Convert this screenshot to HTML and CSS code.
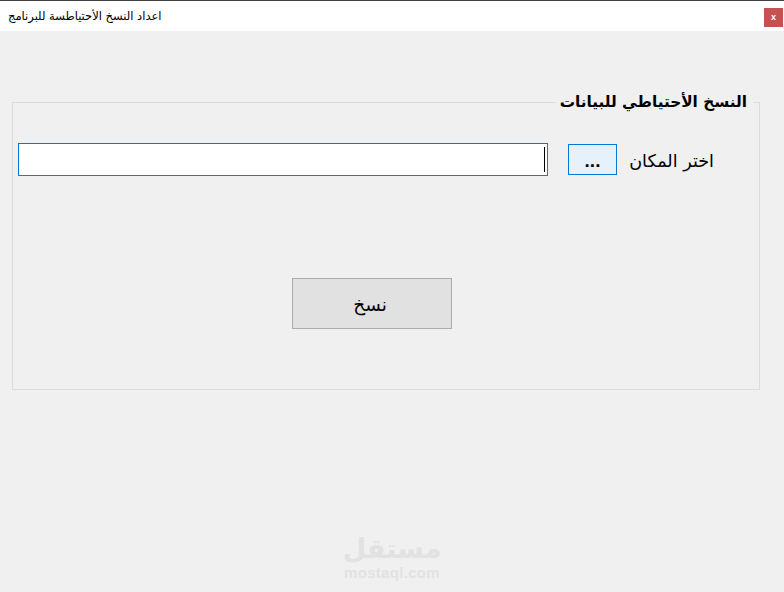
FILE: index.html
```html
<!DOCTYPE html>
<html lang="ar" dir="rtl">
<head>
  <meta charset="UTF-8" />
  <meta name="viewport" content="width=device-width, initial-scale=1.0" />
  <title>اعداد النسخ الأحتياطسة للبرنامج</title>
  <link rel="stylesheet" href="styles.css">
</head>
<body>
  <div class="window">
    <div class="titlebar">
      <span class="title">اعداد النسخ الأحتياطسة للبرنامج</span>
      <button class="close">x</button>
    </div>

    <div class="content">
      <fieldset class="group">
        <legend>النسخ الأحتياطي للبيانات</legend>
        <div class="path-row">
          <span class="path-label">اختر المكان</span>
          <button class="browse">...</button>
          <div class="path-input">
            <span class="caret"></span>
          </div>
        </div>
        <div class="actions">
          <button class="copy">نسخ</button>
        </div>
      </fieldset>
    </div>

    <div class="watermark">
      <div class="mark-ar">مستقل</div>
      <div class="mark-en">mostaql.com</div>
    </div>
  </div>
</body>
</html>
```

FILE: styles.css
```css
html, body { margin: 0; padding: 0; }
body { font-family: "DejaVu Sans", "Noto Sans", sans-serif; background: #f0f0f0; color: #000; }
button { font-family: inherit; cursor: pointer; }

.window { position: relative; width: 784px; height: 592px; overflow: hidden; background: #f0f0f0; }

.titlebar { height: 30px; background: #fff; border-top: 1px solid #444; display: flex; justify-content: space-between; align-items: flex-start; padding: 0 1px 0 0; }
.title { order: 2; font-size: 11.5px; line-height: 30px; margin-left: 8px; white-space: nowrap; }
.close { order: 1; width: 19px; height: 19px; margin: 7px 0 0 1px; padding: 0; border: none; background: #c75050; color: #fff; font-size: 9px; font-weight: bold; line-height: 17px; font-family: "Liberation Sans", sans-serif; }

.content { padding: 59px 24px 0 12px; }

.group { margin: 0; padding: 0 5px 0 0; height: 298px; border: 1px solid #dcdcdc; box-sizing: content-box; min-width: 0; }
.group legend { margin-right: 0; padding: 0 7px 0 4px; font-size: 15.3px; font-weight: bold; line-height: 24px; height: 24px; white-space: nowrap; }

.path-row { display: flex; align-items: center; margin-top: 29px; height: 33px; }
.path-label { width: 85px; margin-right: 40px; margin-left: 12px; padding-top: 2px; font-size: 17.6px; white-space: nowrap; }
.browse { width: 49px; height: 31px; padding: 2px 0 0; border: 1px solid #0078d7; background: #e5f1fb; font-family: "Liberation Sans", sans-serif; font-size: 19px; font-weight: bold; line-height: 1; }
.path-input { width: 528px; height: 31px; margin-right: 20px; background: #fff; border: 1px solid #0078d7; border-right-color: #666; border-bottom-color: #666; display: flex; align-items: center; }
.caret { width: 1px; height: 25px; margin-right: 2px; background: #000; }

.actions { margin-top: 102px; display: flex; justify-content: flex-start; }
.copy { width: 160px; height: 51px; margin-right: 302px; border: 1px solid #adadad; background: #e1e1e1; font-size: 18.5px; padding: 2px 4px 0 0; }

.watermark { position: absolute; left: 332px; top: 532px; width: 120px; text-align: center; color: #e2e2e2; }
.mark-ar { font-size: 27px; font-weight: bold; line-height: 33px; }
.mark-en { font-family: "Liberation Sans", sans-serif; font-size: 15px; font-weight: bold; line-height: 16px; direction: ltr; letter-spacing: 0.3px; }
```
